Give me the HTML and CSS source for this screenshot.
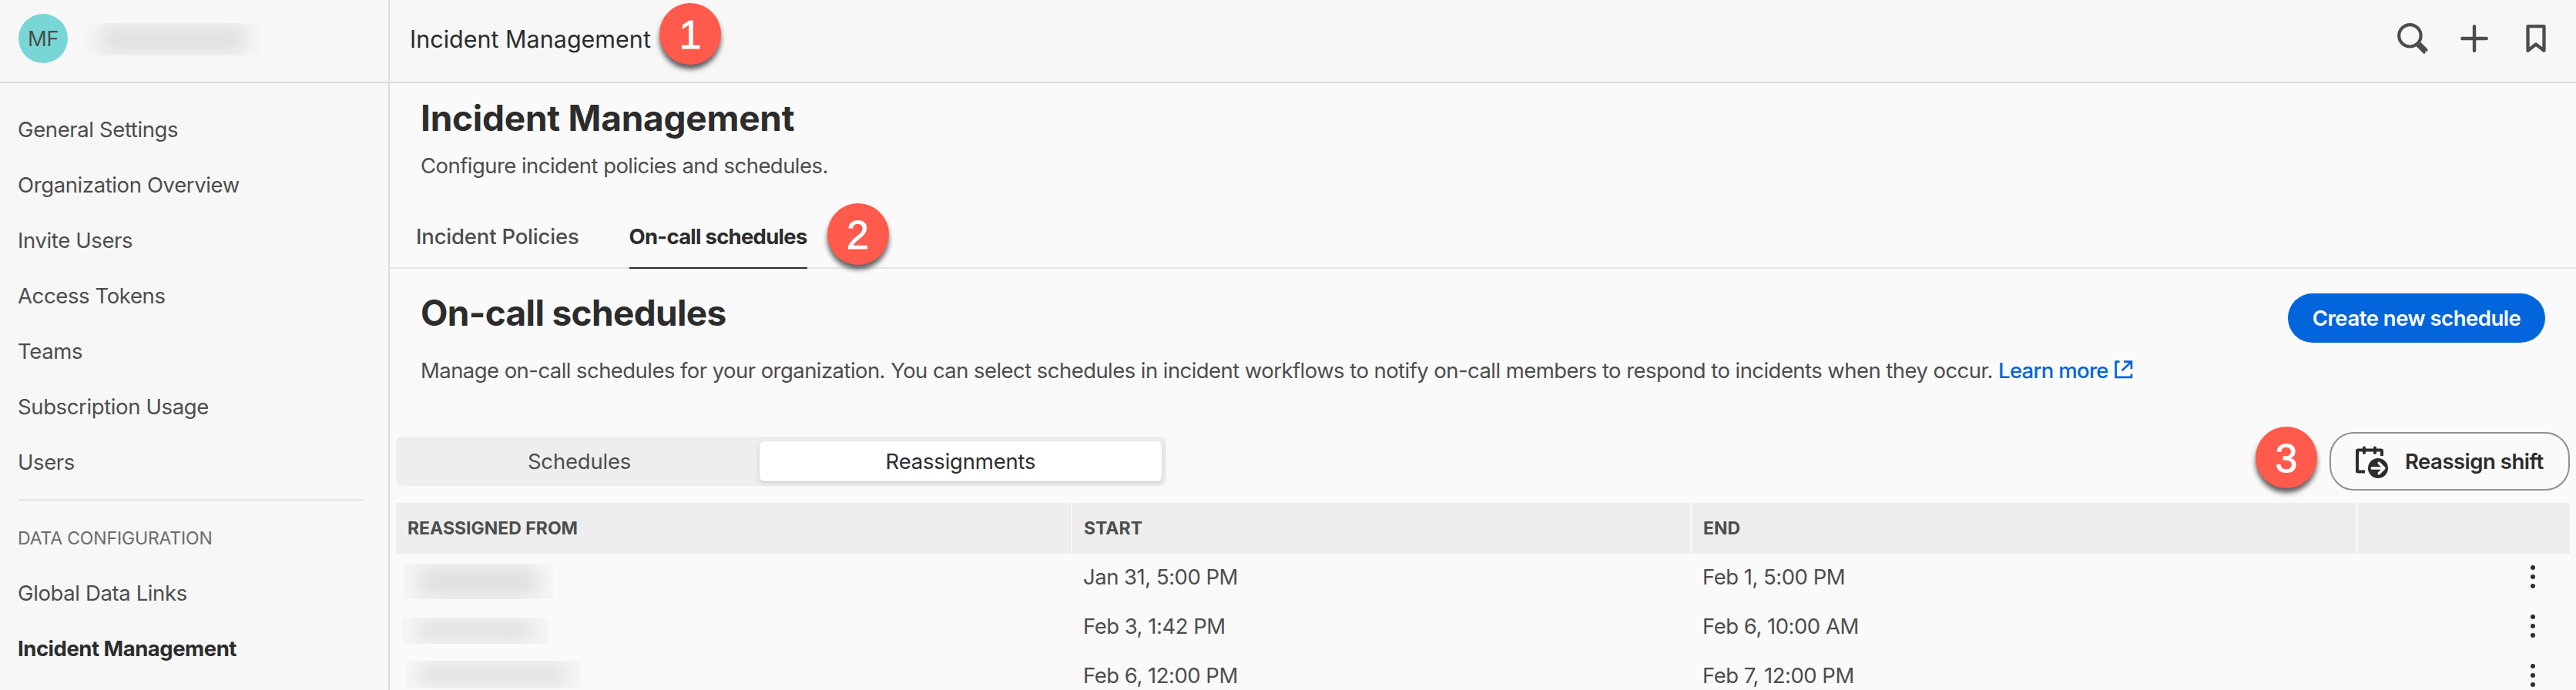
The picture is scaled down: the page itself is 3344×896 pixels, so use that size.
FILE: index.html
```html
<!DOCTYPE html>
<html lang="en">
<head>
<meta charset="utf-8">
<title>Incident Management</title>
<link rel="stylesheet" href="styles.css">
</head>
<body>
<div class="app">
  <header class="topbar">
    <div class="account">
      <span class="avatar">MF</span>
      <span class="redacted redacted-user"></span>
    </div>
    <div class="crumb"><span class="crumb-text">Incident Management</span><span class="badge badge-crumb">1</span></div>
    <div class="actions">
      <svg class="icon" viewBox="0 0 48 48"><circle cx="20.4" cy="20.3" r="14.2" fill="none" stroke="#4d4d4d" stroke-width="4.2"/><path d="M31.8 31.8l8.7 8.6" fill="none" stroke="#4d4d4d" stroke-width="7"/><path d="M33 30l9 9M30 33l9 9" stroke="#4d4d4d" stroke-width="3.4" stroke-linecap="round"/></svg>
      <svg class="icon" viewBox="0 0 48 48"><path d="M24 8.3v31.4M8.3 24h31.4" fill="none" stroke="#4d4d4d" stroke-width="4.4" stroke-linecap="round"/></svg>
      <svg class="icon" viewBox="0 0 48 48"><path d="M13.5 8.2h21v31.6L24 31.5l-10.5 8.3z" fill="none" stroke="#4d4d4d" stroke-width="4.3" stroke-linejoin="round"/></svg>
    </div>
  </header>

  <nav class="sidebar">
    <a class="nav-item">General Settings</a>
    <a class="nav-item">Organization Overview</a>
    <a class="nav-item">Invite Users</a>
    <a class="nav-item">Access Tokens</a>
    <a class="nav-item">Teams</a>
    <a class="nav-item">Subscription Usage</a>
    <a class="nav-item">Users</a>
    <div class="nav-divider"></div>
    <div class="nav-heading">DATA CONFIGURATION</div>
    <a class="nav-item">Global Data Links</a>
    <a class="nav-item nav-current">Incident Management</a>
  </nav>

  <main class="main">
    <div class="page-head">
      <h1 class="title">Incident Management</h1>
      <p class="subtitle">Configure incident policies and schedules.</p>
    </div>
    <div class="tabs">
      <a class="tab">Incident Policies</a>
      <a class="tab tab-active">On-call schedules<span class="badge badge-tab">2</span></a>
    </div>
    <section class="intro">
      <div>
        <h2 class="title title-section">On-call schedules</h2>
        <p class="description">Manage on-call schedules for your organization. You can select schedules in incident workflows to notify on-call members to respond to incidents when they occur. <a class="link">Learn more<svg class="link-icon" viewBox="0 0 24 24"><path d="M6.5 1.6H1.6v20.2h20.3v-4.4M12 1.6h9.9v9.6M21.4 2.1L9.6 13.2" fill="none" stroke="#0265dc" stroke-width="2.7"/></svg></a></p>
      </div>
      <button class="button-primary">Create new schedule</button>
    </section>
    <div class="toolbar">
      <div class="segmented">
        <span class="segment">Schedules</span>
        <span class="segment segment-active">Reassignments</span>
      </div>
      <button class="button-outline">
        <span class="badge badge-action">3</span>
        <svg class="shift-icon" viewBox="0 0 44 44"><path d="M13 35.5H4.2a1.2 1.2 0 0 1-1.2-1.2V8.6a1.2 1.2 0 0 1 1.2-1.2h29.6a1.2 1.2 0 0 1 1.2 1.2v6.4" fill="none" stroke="#2c2c2c" stroke-width="4"/><path d="M12 4.4v6.6M26 4.4v6.6" stroke="#2c2c2c" stroke-width="4" stroke-linecap="round"/><circle cx="30" cy="31" r="13" fill="#2c2c2c"/><path d="M22.2 31H37M31.2 24.3l6.7 6.7-6.7 6.7" fill="none" stroke="#fafafa" stroke-width="3.4" stroke-linecap="round" stroke-linejoin="round"/></svg>
        <span>Reassign shift</span>
      </button>
    </div>
    <div class="table">
      <div class="row row-head"><span class="cell">REASSIGNED FROM</span><span class="cell">START</span><span class="cell">END</span><span class="cell"></span></div>
      <div class="row"><span class="cell"><span class="redacted redacted-a"></span></span><span class="cell">Jan 31, 5:00 PM</span><span class="cell">Feb 1, 5:00 PM</span><span class="cell cell-menu"><i class="dot"></i><i class="dot"></i><i class="dot"></i></span></div>
      <div class="row"><span class="cell"><span class="redacted redacted-b"></span></span><span class="cell">Feb 3, 1:42 PM</span><span class="cell">Feb 6, 10:00 AM</span><span class="cell cell-menu"><i class="dot"></i><i class="dot"></i><i class="dot"></i></span></div>
      <div class="row"><span class="cell"><span class="redacted redacted-c"></span></span><span class="cell">Feb 6, 12:00 PM</span><span class="cell">Feb 7, 12:00 PM</span><span class="cell cell-menu"><i class="dot"></i><i class="dot"></i><i class="dot"></i></span></div>
    </div>
  </main>
</div>
</body>
</html>
```

FILE: styles.css
```css
* { box-sizing: border-box; }

body {
  margin: 0;
  overflow: hidden;
  background: #fafafa;
  color: #4d4d4d;
  font: 400 27.5px/40px Inter, Roboto, sans-serif;
}

h1, h2, p { margin: 0; }
button { font: inherit; border: 0; margin: 0; }

.app {
  display: grid;
  grid-template-columns: 506px 1fr;
  grid-template-rows: 108px 788px;
  width: 3344px;
  height: 896px;
}

/* Top bar */
.topbar {
  grid-column: 1 / 3;
  display: flex;
  background: #f7f7f7;
  border-bottom: 2px solid #dcdcdc;
}
.account {
  display: flex;
  align-items: center;
  width: 506px;
  padding: 0 0 6px 24px;
  border-right: 2px solid #dcdcdc;
}
.avatar {
  width: 64px;
  height: 64px;
  border-radius: 50%;
  background: #78d7d6;
  line-height: 64px;
  text-align: center;
  letter-spacing: -0.5px;
}
.crumb {
  position: relative;
  padding: 31px 0 0 26px;
  color: #2c2c2c;
  font-size: 30.5px;
}
.actions {
  display: flex;
  align-items: center;
  gap: 32px;
  margin-left: auto;
  padding: 0 28px 6px 0;
}
.icon { width: 48px; height: 48px; }

/* Numbered callouts */
.badge {
  position: absolute;
  width: 80px;
  height: 80px;
  border-radius: 50%;
  background: #ff5a4c;
  box-shadow: 0 6px 6px rgba(0, 0, 0, 0.62);
  color: #fff;
  font: 400 52px/82px "Liberation Sans", Arial, sans-serif;
  -webkit-text-stroke: 0.9px #fff;
  letter-spacing: 0;
  text-align: center;
}
.badge-crumb { left: 350px; top: 4px; }
.badge-tab { left: 257px; top: -23px; }
.badge-action { left: -98px; top: -9px; }

/* Blurred names */
.redacted {
  display: block;
  overflow: hidden;
  background: #f7f7f7;
}
.redacted::before {
  content: "";
  display: block;
  height: calc(100% - 6px);
  margin: 3px 18px;
  background: #dfdfdf;
  filter: blur(13px);
}
.redacted-user { width: 228px; height: 42px; margin: 2px 0 0 22px; }
.redacted-a { width: 194px; height: 46px; margin: 15px 0 0 -4px; }
.redacted-b { width: 190px; height: 34px; margin: 21px 0 0 -6px; }
.redacted-c { width: 226px; height: 36px; margin: 13px 0 0 0; }

/* Sidebar */
.sidebar {
  display: flex;
  flex-direction: column;
  padding: 24px 32px 0 23px;
  background: #f7f7f7;
  border-right: 2px solid #dcdcdc;
}
.nav-item {
  height: 72px;
  line-height: 73px;
  letter-spacing: -0.38px;
  white-space: nowrap;
}
.nav-current { color: #2c2c2c; font-weight: 700; letter-spacing: -0.48px; }
.nav-divider {
  height: 2px;
  margin: 12px 0 0 1px;
  background: #e5e5e5;
}
.nav-heading {
  padding: 25px 0 12px;
  color: #6b6b6b;
  font-size: 23px;
  line-height: 49px;
  height: 84px;
  letter-spacing: -0.15px;
}

/* Page heading and tabs */
.main { display: flex; flex-direction: column; overflow: hidden; }
.main > * { flex: none; }
.page-head { padding: 17px 0 0 40px; }
.title {
  color: #2c2c2c;
  font-size: 46px;
  font-weight: 700;
  line-height: 56px;
  letter-spacing: -0.25px;
}
.subtitle { padding-top: 14px; letter-spacing: -0.55px; }
.tabs {
  display: flex;
  gap: 65px;
  height: 114px;
  padding: 52px 0 0 34px;
  border-bottom: 2px solid #e5e5e5;
}
.tab { font-weight: 500; height: 62px; letter-spacing: -0.2px; }
.tab-active {
  position: relative;
  border-bottom: 2px solid #2c2c2c;
  color: #2c2c2c;
  font-weight: 700;
  letter-spacing: -0.75px;
}

/* Section introduction */
.intro {
  display: flex;
  justify-content: space-between;
  align-items: flex-start;
  height: 212px;
  padding: 29px 40px 0 40px;
}
.title-section { letter-spacing: -0.65px; }
.description {
  padding-top: 27px;
  letter-spacing: -0.56px;
  white-space: nowrap;
}
.link { color: #0265dc; font-weight: 500; letter-spacing: -0.7px; }
.link-icon { width: 24px; height: 24px; margin-left: 8px; vertical-align: -1px; }
.button-primary {
  width: 334px;
  height: 64px;
  margin-top: 3px;
  padding: 0;
  border-radius: 32px;
  background: #0265dc;
  color: #fff;
  font-weight: 600;
  letter-spacing: -0.5px;
}

/* View switch and action */
.toolbar {
  display: flex;
  justify-content: space-between;
  align-items: center;
  height: 76px;
  padding: 0 8px;
}
.segmented {
  display: flex;
  width: 1000px;
  height: 64px;
  padding: 6px;
  border-radius: 8px;
  background: #eee;
}
.segment {
  flex: 1;
  padding-right: 2px;
  line-height: 52px;
  text-align: center;
  letter-spacing: -0.2px;
}
.segment-active {
  flex: 0 0 522px;
  padding-right: 0;
  border-radius: 6px;
  background: #fff;
  box-shadow: 0 2px 8px rgba(0, 0, 0, 0.1), 0 1px 2px rgba(0, 0, 0, 0.1);
  color: #2c2c2c;
}
.button-outline {
  position: relative;
  display: flex;
  align-items: center;
  gap: 21px;
  width: 312px;
  height: 76px;
  padding: 0 0 0 31px;
  border: 2px solid #909090;
  border-radius: 32px;
  background: #fafafa;
  color: #2c2c2c;
  font-weight: 600;
  letter-spacing: -0.5px;
  white-space: nowrap;
}
.shift-icon { flex: none; width: 44px; height: 44px; }

/* Reassignments table */
.table { padding: 16px 8px 0; }
.row {
  display: grid;
  grid-template-columns: 876px 802px 863px 275px;
  column-gap: 2px;
  height: 64px;
}
.cell {
  padding-left: 14px;
  line-height: 64px;
  letter-spacing: -0.5px;
  white-space: nowrap;
}
.row-head .cell {
  padding-left: 15px;
  background: #eee;
  font-size: 23px;
  font-weight: 700;
  line-height: 66px;
  letter-spacing: 0;
}
.cell-menu {
  display: flex;
  flex-direction: column;
  gap: 6px;
  align-items: flex-end;
  padding: 17px 45px 0 0;
}
.dot {
  width: 6px;
  height: 6px;
  border-radius: 50%;
  background: #2c2c2c;
}
```
